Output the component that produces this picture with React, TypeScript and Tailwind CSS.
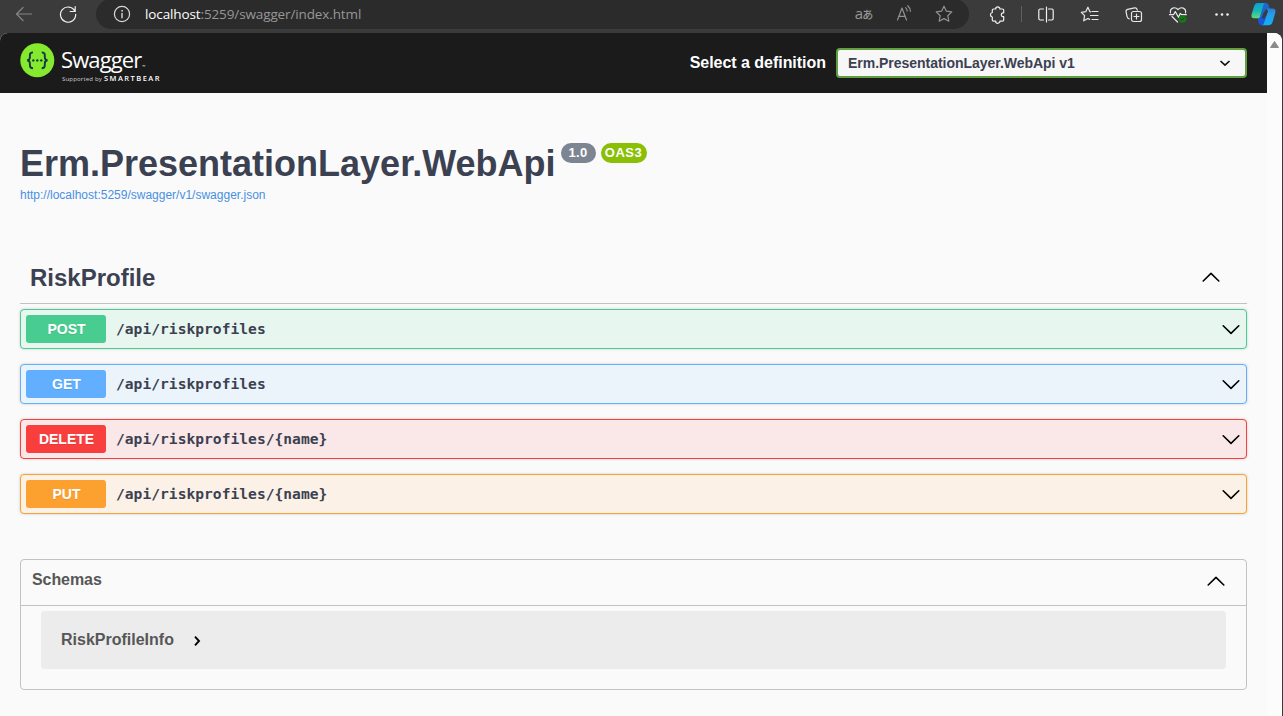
import React from 'react';

type SvgProps = { children: React.ReactNode; w?: number; h?: number; color?: string };

function Icon({ children, w = 20, h = 20, color = '#d8d8d8' }: SvgProps) {
  return (
    <svg width={w} height={h} viewBox={`0 0 ${w} ${h}`} fill="none" stroke={color} strokeWidth="1.2" strokeLinecap="round" strokeLinejoin="round">
      {children}
    </svg>
  );
}

function Slot({ children }: { children: React.ReactNode }) {
  return <div className="flex h-[29px] w-11 shrink-0 items-center justify-center">{children}</div>;
}

function SmallSlot({ children }: { children: React.ReactNode }) {
  return <div className="flex h-[29px] w-10 shrink-0 items-center justify-center">{children}</div>;
}

function Toolbar() {
  return (
    <div className="flex h-[33px] shrink-0 items-start overflow-hidden bg-[#3b3b3b] pl-[2px]">
      <Slot>
        <Icon color="#858585"><path d="M17.500 9H2.500M9 2.500 2.500 9 9 15.500" /></Icon>
      </Slot>
      <Slot>
        <Icon color="#f0f0f0"><path d="M16.800 6A7.600 7.600 0 1 0 17.700 9.300M17.200 1.500V6.500h-5" /></Icon>
      </Slot>
      <div className="-mt-px ml-[6px] flex h-[30px] w-[873px] shrink-0 items-center rounded-full bg-[#2b2b2b] pl-[16px] pr-[5px]">
        <Icon color="#d8d8d8">
          <circle cx="10" cy="10" r="7.6" />
          <path d="M10 9.500v4.200" strokeWidth="1.4" />
          <circle cx="10" cy="6.800" r=".5" fill="#d8d8d8" strokeWidth=".8" />
        </Icon>
        <div className="ml-[13px] flex-1 font-['Open_Sans',sans-serif] text-[13.5px] leading-[20px] tracking-[-0.120px] text-[#979797]">
          <span className="text-white">localhost</span>:5259/swagger/index.html
        </div>
        <SmallSlot>
          <div className="flex items-baseline font-['Open_Sans','Noto_Sans_CJK_JP',sans-serif] leading-[20px] text-[#979797]">
            <span className="text-[15px]">a</span>
            <span className="-ml-px text-[11px] font-medium">あ</span>
          </div>
        </SmallSlot>
        <SmallSlot>
          <Icon color="#929292">
            <path d="M3.500 16 8 4l4.500 12M5 12.300h6" />
            <path d="M11.600 3.600c1 .9 1.500 2 1.600 3.400M13.800 1.700c1.700 1.500 2.500 3.300 2.600 5.500" />
          </Icon>
        </SmallSlot>
        <SmallSlot>
          <Icon color="#929292">
            <path d="m10 2.200 2.400 5 5.400.7-4 3.800 1 5.500-4.800-2.600-4.800 2.600 1-5.500-4-3.800 5.400-.7z" />
          </Icon>
        </SmallSlot>
      </div>
      <div className="ml-[7px]">
        <Slot>
          <Icon color="#f0f0f0">
            <path d="M5.500 4h2.200a2.100 2.100 0 0 1 4.200 0h2.600a1.200 1.200 0 0 1 1.200 1.200v2.600h-.9a2 2 0 0 0 0 3.900h.9v3.300a1.200 1.200 0 0 1-1.200 1.200h-2.600a2.100 2.100 0 0 1-4.200 0H5.500a1.200 1.200 0 0 1-1.200-1.200v-3a2.300 2.300 0 0 1 0-4.500V5.200A1.200 1.200 0 0 1 5.500 4z" />
          </Icon>
        </Slot>
      </div>
      <div className="ml-px mt-[6px] h-4 w-px bg-[#606060]" />
      <div className="ml-[2px] flex">
        <Slot>
          <Icon color="#f0f0f0">
            <path d="M7.500 4H4.200a1.400 1.400 0 0 0-1.400 1.400v8.200A1.400 1.400 0 0 0 4.200 15h3.300M12.500 4h3.300a1.400 1.400 0 0 1 1.400 1.400v8.200a1.400 1.400 0 0 1-1.400 1.400h-3.300M10.500 2v15" />
          </Icon>
        </Slot>
        <Slot>
          <Icon color="#e8e8e8">
            <path d="M10.500 6.800 9.900 6.700 7.900 2.200 5.800 6.700l-4.500.6 3.300 3.300-.9 5.200 4.200-2.300 1.700.9M12 6.500h6M10.500 10.500H18M12 14.500h6" />
          </Icon>
        </Slot>
        <Slot>
          <Icon color="#e8e8e8">
            <rect x="7.500" y="6.500" width="10" height="10" rx="2" />
            <path d="M12.500 9v5M10 11.500H15M5.200 13.800C3.800 13.500 3.300 12.500 3 11.300L2.100 6.800C1.900 5.500 2.300 4.700 3.600 4.400l7-1.500c1.300-.3 2 .2 2.400 1.300l.3.900" />
          </Icon>
        </Slot>
        <Slot>
          <Icon color="#e8e8e8">
            <path d="M2.500 8C1.500 3.200 7 1 10 4.600 13 1 18.500 3.200 17.500 8M4 11.500l5.500 5.500M1.500 9.700h4L7.300 6.600l3.200 5.700 1.800-4 1.200 1.400h4.800" />
            <circle cx="14.500" cy="14" r="3.800" fill="#127b12" stroke="none" />
            <path d="m12.800 14 1.200 1.200 2.100-2.300" stroke="#2b2b2b" strokeWidth=".9" />
          </Icon>
        </Slot>
        <Slot>
          <Icon color="#f0f0f0">
            <g fill="#f0f0f0" stroke="none">
              <circle cx="4.500" cy="9.500" r="1.300" /><circle cx="10" cy="9.500" r="1.300" /><circle cx="15.500" cy="9.500" r="1.300" />
            </g>
          </Icon>
        </Slot>
        <div className="ml-[7px] pt-[2px]">
          <svg width="26" height="25" viewBox="0 0 26 25">
            <defs>
              <linearGradient id="cpLeft" x1="0" y1="0" x2="0" y2="1">
                <stop offset="0" stopColor="#0a9fd8" /><stop offset=".5" stopColor="#16b6b8" /><stop offset="1" stopColor="#62db78" />
              </linearGradient>
              <linearGradient id="cpRight" x1="0" y1="0" x2="0" y2="1">
                <stop offset="0" stopColor="#2b5cc4" /><stop offset=".5" stopColor="#279cec" /><stop offset="1" stopColor="#12b0f5" />
              </linearGradient>
            </defs>
            <path d="M6 14h9l-2 8c-.5 1-1 1.300-2 1.300-2 0-3-1.300-3.500-3.300z" fill="#1458de" />
            <path d="M14.500 1c2 0 2.800 1.200 3.300 3L18.500 6.500H21.500c2.500 0 3.500 1.600 2.800 4l-2.700 9.500c-.7 2.200-2 3.300-4.200 3.300h-7c1.500 0 2.200-.8 2.700-2.500L17 9l-3-4z" fill="url(#cpRight)" />
            <path d="M6.800 1h8.500c-1.300.2-1.900 1-2.400 2.700L9.400 14c-.5 1.500-1.300 2.300-3 2.300H3.300C.8 16.300 0 14.700.6 12.400L3.200 4C3.900 2 5 1 6.800 1z" fill="url(#cpLeft)" />
            <path d="M13 1.600c.6-.4 1.200-.6 2-.6 1.500 0 2.200 1 2.600 3l.7 2.500c-3 0-4 .5-4.700 3l-1.500 4.500H9.200z" fill="#1c67c9" />
            <path d="M12.600 10.500 10.800 16.500h2.800l1.700-6z" fill="#3b3b3b" />
          </svg>
        </div>
      </div>
    </div>
  );
}

function SwaggerLogo() {
  return (
    <div className="flex items-start">
      <svg width="35" height="35" viewBox="0 0 35 35" className="shrink-0">
        <circle cx="17.300" cy="17.300" r="17" fill="#85ea2d" />
        <g fill="none" stroke="#173647" strokeWidth="1.900">
          <path d="M13 9.400c-2.300 0-3.100.7-3.100 2.600v2.200c0 1.900-.7 2.800-2.700 3.100 2 .3 2.700 1.200 2.700 3.100v2.200c0 1.900.8 2.700 3.100 2.700" />
          <path d="M21.700 9.400c2.300 0 3.100.7 3.100 2.600v2.200c0 1.900.7 2.800 2.700 3.100-2 .3-2.700 1.200-2.700 3.100v2.200c0 1.900-.8 2.700-3.100 2.700" />
        </g>
        <g fill="#173647">
          <circle cx="13.300" cy="17.400" r="1.200" /><circle cx="17.300" cy="17.400" r="1.200" /><circle cx="21.300" cy="17.400" r="1.200" />
        </g>
      </svg>
      <div className="ml-[6px] pt-[3px] font-['Open_Sans',sans-serif] text-white">
        <div className="flex h-[27px] items-baseline whitespace-nowrap text-[22px] leading-[26px] tracking-[-0.900px]">
          Swagger<span className="ml-px text-[4px] tracking-normal">™</span>
        </div>
        <div className="flex h-[10px] items-baseline whitespace-nowrap pl-[1px] leading-[10px]">
          <span className="w-[42px] text-[6px] tracking-[0.180px] text-[#d0d0d0]">Supported by</span>
          <span className="text-[7.500px] font-semibold tracking-[1.450px]">SMARTBEAR</span>
        </div>
      </div>
    </div>
  );
}

function Chevron({ up = false }: { up?: boolean }) {
  return (
    <svg width="20" height="20" viewBox="0 0 20 20" fill="none" stroke="#000" strokeWidth="1.600" strokeLinecap="round" strokeLinejoin="round">
      <path d={up ? 'M2.200 14 10 6.400l7.800 7.600' : 'M2.200 6.800 10 14.400l7.800-7.600'} />
    </svg>
  );
}

const operations = [
  { method: 'POST', path: '/api/riskprofiles', row: 'border-[#49cc90] bg-[#e8f6f0]', tag: 'bg-[#49cc90]' },
  { method: 'GET', path: '/api/riskprofiles', row: 'border-[#61affe] bg-[#ebf3fb]', tag: 'bg-[#61affe]' },
  { method: 'DELETE', path: '/api/riskprofiles/{name}', row: 'border-[#f93e3e] bg-[#fae7e7]', tag: 'bg-[#f93e3e]' },
  { method: 'PUT', path: '/api/riskprofiles/{name}', row: 'border-[#fca130] bg-[#fbf1e6]', tag: 'bg-[#fca130]' },
];

export default function App() {
  return (
    <div className="flex h-[716px] w-[1283px] flex-col overflow-hidden bg-[#3b3b3b] font-['Liberation_Sans',Arial,sans-serif] text-[#3b4151]">
      <Toolbar />
      <div className="mr-px flex flex-1 overflow-hidden rounded-t-lg bg-[#fafafa]">
        <main className="w-[1267px]">
          <header className="flex h-[60px] items-start justify-between bg-[#1b1b1b] pl-5 pr-5">
            <div className="pt-[10px]"><SwaggerLogo /></div>
            <div className="flex items-center pt-[15px]">
              <span className="mr-[10px] text-base font-bold tracking-[-0.030px] text-white">Select a definition</span>
              <div className="flex h-[30px] w-[411px] items-center justify-between rounded-[4px] border-2 border-[#62a03f] bg-[#f7f7f7] pl-[10px] pr-[14px] text-sm font-bold tracking-[-0.030px]">
                Erm.PresentationLayer.WebApi v1
                <svg width="12" height="12" viewBox="0 0 12 12" fill="none" stroke="#111" strokeWidth="1.700"><path d="m1.500 4 4.500 4.200L10.500 4" /></svg>
              </div>
            </div>
          </header>

          <div className="px-5">
            <div className="flex h-[94px] items-start pt-[50px]">
              <h1 className="whitespace-nowrap text-[36px] font-bold leading-[41px]">Erm.PresentationLayer.WebApi</h1>
              <span className="ml-[5px] flex h-5 w-[35px] items-center justify-center rounded-full bg-[#7d8492] text-[13px] font-bold tracking-[0.300px] text-white">1.0</span>
              <span className="ml-[5px] flex h-5 w-[46px] items-center justify-center rounded-full bg-[#89bf04] text-[13px] font-bold tracking-[0.500px] text-white">OAS3</span>
            </div>
            <a className="block h-[16px] text-xs leading-[16px] text-[#4990e2]">http://localhost:5259/swagger/v1/swagger.json</a>

            <section className="pt-[50px]">
              <div className="flex h-[51px] items-center justify-between border-b border-[#c0c2c6] pl-[10px] pr-[26px]">
                <h2 className="text-2xl font-bold">RiskProfile</h2>
                <div className="pb-[3px]"><Chevron up /></div>
              </div>
              <div className="mt-[5px] flex flex-col gap-[15px]">
                {operations.map((op) => (
                  <div key={op.method} className={`flex h-10 items-center rounded-[4px] border pl-[5px] pr-[5px] shadow-[0_0_3px_rgba(0,0,0,0.19)] ${op.row}`}>
                    <span className={`flex h-7 w-20 items-center justify-center rounded-[3px] pl-px text-sm font-bold text-white [text-shadow:0_1px_0_rgba(0,0,0,0.1)] ${op.tag}`}>{op.method}</span>
                    <span className="ml-[10px] flex-1 font-['DejaVu_Sans_Mono',monospace] text-[14.600px] font-bold tracking-[0.020px]">{op.path}</span>
                    <Chevron />
                  </div>
                ))}
              </div>
            </section>

            <section className="mt-[45px] h-[131px] rounded-[4px] border border-[#c0c2c5] text-[#575757]">
              <div className="flex h-[46px] items-center justify-between border-b border-[#c0c2c5] pl-[11px] pr-[20px]">
                <h3 className="pb-[5px] text-base font-bold tracking-[-0.080px]">Schemas</h3>
                <div className="pb-[4px]"><Chevron up /></div>
              </div>
              <div className="mx-5 mt-[5px] flex h-[58px] items-center rounded-[4px] bg-[#ececec] pl-5">
                <span className="text-base font-bold">RiskProfileInfo</span>
                <svg width="12" height="12" viewBox="0 0 12 12" className="ml-[17px] mt-px" fill="none" stroke="#000" strokeWidth="1.900"><path d="m4 1.700 4 4.300-4 4.300" /></svg>
              </div>
            </section>
          </div>
        </main>
        <aside className="flex w-[15px] justify-center bg-[#fcfcfc] pt-2">
          <svg width="9" height="7" viewBox="0 0 9 7"><path d="M4.500.5 8.500 6.500h-8z" fill="#8b8b8b" stroke="#8b8b8b" strokeLinejoin="round" /></svg>
        </aside>
      </div>
    </div>
  );
}
